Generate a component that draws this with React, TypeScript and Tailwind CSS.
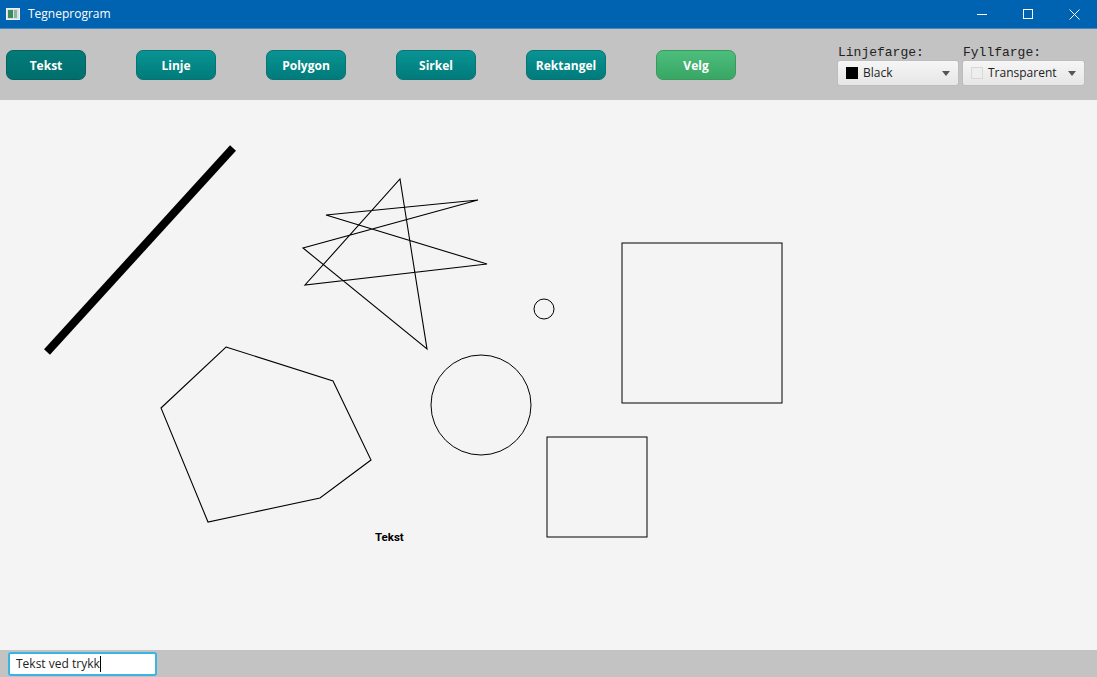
import React from "react";

const tools = ["Tekst", "Linje", "Polygon", "Sirkel", "Rektangel", "Velg"];

function ToolButton({ label, index }: { label: string; index: number }) {
  let cls =
    "bg-gradient-to-b from-[#0a9393] to-[#017b7b] border-[#0b7272] text-white";
  if (index === 0) cls = "bg-gradient-to-b from-[#037b79] to-[#006f6d] border-[#05605f] text-white";
  if (label === "Velg") cls = "bg-gradient-to-b from-[#4cbe7c] to-[#39a664] border-[#3a9a5e] text-white";
  return (
    <button
      type="button"
      className={`w-[80px] h-[30px] rounded-[7px] border text-[12px] font-bold pt-[2px] ${cls}`}
      style={{ fontFamily: '"Open Sans", sans-serif' }}
    >
      {label}
    </button>
  );
}

function Combo({ label, swatch, text, width }: { label: string; swatch: string; text: string; width: string }) {
  return (
    <div className="flex flex-col">
      <span className="text-[13px] leading-[14px] text-[#222] pl-[1px] h-[14px]" style={{ fontFamily: '"Liberation Mono", monospace' }}>
        {label}
      </span>
      <div className={`${width} h-[26px] flex items-center rounded-[3px] border border-[#bdbdbd] bg-gradient-to-b from-[#f6f6f6] to-[#e6e6e6] px-[8px]`}>
        <span className={`w-[12px] h-[12px] ${swatch}`} />
        <span className="ml-[5px] text-[12px] text-[#222]" style={{ fontFamily: '"Open Sans", sans-serif' }}>
          {text}
        </span>
        <svg className="ml-auto" width="8" height="5" viewBox="0 0 8 5">
          <path d="M0 0 L8 0 L4 5 Z" fill="#555" />
        </svg>
      </div>
    </div>
  );
}

export default function App() {
  return (
    <div className="w-[1097px] h-[677px] flex flex-col overflow-hidden bg-[#c3c3c3]">
      <div className="h-[29px] bg-[#0063b1] flex items-center text-white border-b border-[#4a86c0]">
        <div className="ml-[6px] w-[14px] h-[12px] bg-[#d8e0e6] border border-[#eef2f5] flex p-[1px]">
          <div className="w-[5px] bg-[#3d8a5c]" />
          <div className="w-[3px] ml-[1px] bg-[#8fb39b]" />
        </div>
        <span className="ml-[8px] text-[12px]" style={{ fontFamily: '"Open Sans", sans-serif' }}>
          Tegneprogram
        </span>
        <div className="ml-auto flex items-center h-full">
          <div className="w-[46px] h-full flex items-center justify-center">
            <div className="w-[10px] h-px bg-white" />
          </div>
          <div className="w-[46px] h-full flex items-center justify-center">
            <div className="w-[10px] h-[10px] border border-white" />
          </div>
          <div className="w-[46px] h-full flex items-center justify-center">
            <svg width="11" height="11" viewBox="0 0 11 11">
              <path d="M0.5 0.5 L10.5 10.5 M10.5 0.5 L0.5 10.5" stroke="white" strokeWidth="1" />
            </svg>
          </div>
        </div>
      </div>

      <div className="h-[71px] flex items-start bg-[#c3c3c3]">
        <div className="flex gap-[50px] pl-[6px] pt-[21px]">
          {tools.map((t, i) => (
            <ToolButton key={t} label={t} index={i} />
          ))}
        </div>
        <div className="ml-auto mr-[12px] flex gap-[3px] pt-[17px]">
          <Combo label="Linjefarge:" swatch="bg-black" text="Black" width="w-[122px]" />
          <Combo label="Fyllfarge:" swatch="bg-[#eeeeee] border border-[#d8d8d8]" text="Transparent" width="w-[123px]" />
        </div>
      </div>

      <div className="relative h-[550px] bg-[#f4f4f4]">
        <svg width="1097" height="550" viewBox="0 100 1097 550" className="block">
          <line x1="47" y1="352" x2="233" y2="148" stroke="black" strokeWidth="8" />
          <polygon
            points="400,179 427,349 303,248 478,200 326,215 487,264 305,285"
            fill="none"
            stroke="black"
            strokeWidth="1.1"
          />
          <polygon
            points="226,347 333,381 371,460 320,498 208,522 161,408"
            fill="none"
            stroke="black"
            strokeWidth="1.1"
          />
          <circle cx="544" cy="309" r="10" fill="none" stroke="black" strokeWidth="1" />
          <circle cx="481" cy="405" r="50" fill="none" stroke="black" strokeWidth="1" />
          <rect x="547" y="437" width="100" height="100" fill="none" stroke="black" strokeWidth="1" />
          <rect x="622" y="243" width="160" height="160" fill="none" stroke="black" strokeWidth="1" />
          <text x="375" y="541" fontSize="11.5" fontWeight="bold" fontFamily="Roboto, sans-serif" fill="black">
            Tekst
          </text>
        </svg>
      </div>

      <div className="flex-1 flex items-center px-[8px] bg-[#c3c3c3]">
        <div className="w-[149px] h-[24px] bg-white rounded-[3px] border-2 border-[#3bb3e3] flex items-center px-[6px] pt-[1px]">
          <span className="text-[12px] text-[#222]" style={{ fontFamily: '"Open Sans", sans-serif' }}>
            Tekst ved trykk
          </span>
          <span className="w-px h-[16px] bg-black" />
        </div>
      </div>
    </div>
  );
}
